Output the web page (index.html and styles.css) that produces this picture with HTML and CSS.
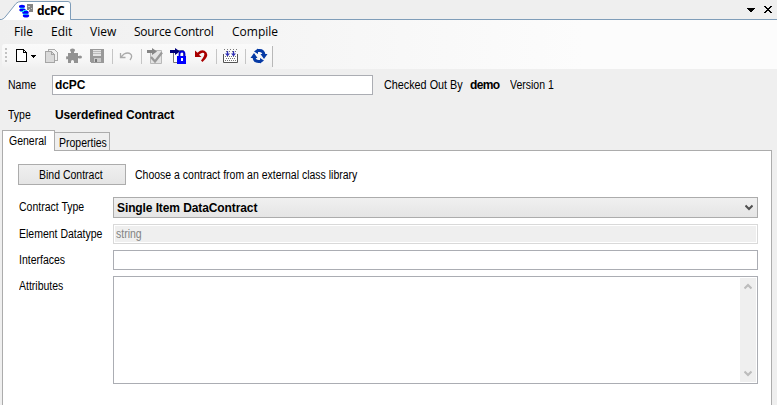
FILE: index.html
```html
<!DOCTYPE html>
<html lang="en">
<head>
<meta charset="utf-8">
<title>dcPC</title>
<link rel="stylesheet" href="styles.css">
</head>
<body>
<header class="tabstrip">
  <svg class="doc-tab" width="72" height="20" viewBox="0 0 72 20">
    <path d="M0 19.5H1.5Q4 19 6 16L16 3.5Q18 1.500 21 1.500H68Q70.500 1.500 70.500 4V19.500H72V20H0Z" fill="#fff"/>
    <path d="M0 19.5H1.500Q4 19 6 16L16 3.500Q18 1.500 21 1.500H68Q70.500 1.500 70.500 4V19.500H72" fill="none" stroke="#7f9db9"/>
    <g fill="#00f"><ellipse cx="22" cy="6.500" rx="3" ry="1.800"/><ellipse cx="22.500" cy="10" rx="3.200" ry="1.800"/><ellipse cx="25.500" cy="12.500" rx="3.200" ry="2"/><ellipse cx="26" cy="15.800" rx="3.200" ry="1.800"/></g>
    <path d="M20 8.200h4M21 11.500h3M23 10.500h4M23 14.200h5" stroke="#17d9f0"/>
    <path d="M27 4h6v8h-4v-2h-2z" fill="#858585"/>
    <path d="M28 6.500h2M31 8.500h1M29 9.500h1" stroke="#ccc"/>
  </svg>
  <span class="doc-name">dcPC</span>
  <svg class="window-btns" width="30" height="12" viewBox="0 0 30 12" shape-rendering="crispEdges">
    <path d="M2 4h8v1h-1v1h-1v1h-1v1h-2v-1h-1v-1h-1v-1h-1z" fill="#000"/>
    <path d="M19 2h2v1h1v1h2v-1h1v-1h2v1h-1v1h-1v1h-1v1h1v1h1v1h1v1h-2v-1h-1v-1h-2v1h-1v1h-2v-1h1v-1h1v-1h1v-1h-1v-1h-1v-1h-1z" fill="#000"/>
  </svg>
</header>
<div class="bars">
  <nav class="menu">
    <span class="m-file">File</span><span class="m-edit">Edit</span><span class="m-view">View</span><span class="m-source">Source Control</span><span class="m-compile">Compile</span>
  </nav>
  <div class="toolbar">
    <svg width="271" height="25" viewBox="2 44 271 25">
      <g shape-rendering="crispEdges">
        <path d="M5 48h2v2H5zM5 52h2v2H5zM5 56h2v2H5zM5 60h2v2H5z" fill="#c2c2c2"/>
        <path d="M16.500 49.500h7l3 3v9h-10z" fill="#fff" stroke="#000"/><path d="M23.500 49v3.500H27" fill="none" stroke="#000"/>
        <path d="M31 55h5v1h-1v1h-1v1h-1v-1h-1v-1h-1z"/>
        <path d="M48.500 49.500h6l3 3v8h-9z" fill="#f1f1f1" stroke="#aaa"/>
        <path d="M45.500 51.500h6l3 3v8h-9z" fill="#dadada" stroke="#a5a5a5"/>
        <path d="M51.500 51.500v3h3" fill="none" stroke="#a5a5a5"/>
      </g>
      <path d="M68 53h3v-1q-1-1-1-2 0-1.500 2.500-1.500t2.500 1.500q0 1-1 2v1h4v3q1 0 2-.5 2 0 2 1.500t-2 1.500q-1 0-2-.5v5h-4v-1.500q0-1.500-1.500-1.500t-1.500 1.500V63h-3v-4l-1.500.5-.5-1.500.5-2 1.500.5z" fill="#929292"/>
      <g shape-rendering="crispEdges">
        <path d="M90 49h14v14H91l-1-1z" fill="#999"/>
        <path d="M93 50h8v6h-8z" fill="#e4e4e4"/><path d="M93 51h8v1h-8zM93 53h8v1h-8z" fill="#bbb"/>
        <path d="M94 58h7v4h-7z" fill="#c9c9c9"/><path d="M95 59h2v3h-2z" fill="#777"/>
        <path d="M112.500 49v15M141.500 49v15M216.500 49v15M245.500 49v15" stroke="#c5c5c5"/>
      </g>
      <path d="M120.500 53v4.500h5M121 57l3-3q4-2 6.500 0t-.5 6" fill="none" stroke="#aaa" stroke-width="1.300"/>
      <!-- check in -->
      <path d="M150.500 50.500h11v13h-11z" fill="#e3e3e3" stroke="#b8b8b8"/>
      <path d="M147 50h5v-2l5 3.500-5 3.500v-2h-5z" fill="#858585"/>
      <path d="M151 57l4 4.500 7-9" fill="none" stroke="#999" stroke-width="2.300"/>
      <!-- check out -->
      <path d="M173.500 50.500h10v12h-10z" fill="#fff" stroke="#777"/>
      <path d="M170 50h5v-2l5 3.500-5 3.500v-2h-5z" fill="#00007b"/>
      <path d="M179.500 57v-3q0-2.500 2.500-2.500t2.500 2.500v3" fill="none" stroke="#0000d8" stroke-width="1.800"/>
      <path d="M177 56h9v8h-9z" fill="#00f"/><path d="M181 58h2v3h-2z" fill="#fff"/>
      <path d="M195 50.500v6.500h6.500l-2.500-2.200q3-3 5-1.800 1.500 2-3 7.500l1.500 1.500q6.500-5.500 4-9.500-4-4.500-9 .3z" fill="#a90000"/>
      <!-- compile -->
      <path d="M223.500 54v8.500h14V54" fill="#fff" stroke="#555" stroke-width="1"/>
      <path d="M224 49.500h13M226 51.500h11" stroke="#777" stroke-dasharray="1 2"/>
      <path d="M225 56.500h12M226 58.500h10M225 60.500h12" stroke="#777" stroke-dasharray="1 1"/>
      <path d="M227.500 51v4M233.500 51v4" stroke="#3333b5" stroke-width="1.300"/><path d="M225 53.500h5l-2.500 3zM231 53.500h5l-2.500 3z" fill="#3333b5"/>
      <!-- refresh -->
      <g fill="none" stroke="#063aa5" stroke-width="3"><path d="M257 50.500h2.500q4 0 4.500 4.500"/><path d="M261 61.500h-2.500q-4 0-4.500-4.500"/></g>
      <path d="M260.500 54h7l-3.500 5zM257.500 58h-7l3.500-5zM258 48.500v5.500l-4-2.500zM260 63.500V58l4 2.500z" fill="#063aa5"/>
      <path d="M273 46v21" stroke="#b8b8b8" stroke-width="2"/>
    </svg>
  </div>
</div>
<main>
  <div class="name-row">
    <span class="lbl name-lbl"><i>Name</i></span>
    <div class="box name-box"><b class="t-dcpc">dcPC</b></div>
    <span class="lbl checked"><i>Checked Out By</i></span>
    <b class="demo">demo</b>
    <span class="lbl"><i>Version 1</i></span>
  </div>
  <div class="type-row"><span class="lbl type-lbl"><i>Type</i></span><b class="type-val">Userdefined Contract</b></div>
  <div class="tabs">
    <div class="tab active"><i>General</i></div><div class="tab"><i>Properties</i></div>
  </div>
  <section class="panel">
    <div class="bind-row">
      <div class="button"><i>Bind Contract</i></div>
      <span class="lbl"><i class="hint">Choose a contract from an external class library</i></span>
    </div>
    <div class="form">
      <span class="lbl"><i>Contract Type</i></span>
      <div class="combo"><b>Single Item DataContract</b>
        <svg width="8" height="7" viewBox="0 0 8 7"><path d="M.5 1.500L4 5l3.500-3.500" fill="none" stroke="#505050" stroke-width="2"/></svg></div>
      <span class="lbl"><i>Element Datatype</i></span>
      <div class="box disabled"><i>string</i></div>
      <span class="lbl"><i>Interfaces</i></span>
      <div class="box"></div>
      <span class="lbl"><i>Attributes</i></span>
      <div class="box area"><div class="scroll">
        <svg width="8" height="7" viewBox="0 0 8 7"><path d="M.5 5.500L4 2l3.500 3.500" fill="none" stroke="#bcbcbc" stroke-width="2.200"/></svg>
        <svg width="8" height="7" viewBox="0 0 8 7"><path d="M.5 1.500L4 5l3.500-3.500" fill="none" stroke="#bcbcbc" stroke-width="2.200"/></svg>
      </div></div>
    </div>
  </section>
</main>
</body>
</html>
```
FILE: styles.css
```css
* { box-sizing: border-box; }
body { margin: 0; width: 777px; height: 405px; overflow: hidden; background: #efefef; color: #000; font: 12px/14px "Liberation Sans", sans-serif; display: flex; flex-direction: column; }
svg { display: block; flex: none; }
i { font-style: normal; display: inline-block; transform: scaleX(.875); transform-origin: 0 50%; white-space: nowrap; }
b { display: inline-block; white-space: nowrap; letter-spacing: -.1px; }
.tabstrip { height: 20px; display: flex; box-shadow: inset 0 -1px #7f9db9; flex: none; }
.doc-name { margin: 3px 0 0 -35px; font: bold 12px/16px "Open Sans", sans-serif; letter-spacing: -.4px; }
.window-btns { margin: 4px 2px 0 auto; }
.bars { height: 49px; flex: none; background: linear-gradient(90deg, #efefef, #fcfcfc 75%); }
.menu { height: 24px; display: flex; font: 12px/24px "Open Sans", sans-serif; white-space: nowrap; padding-left: 14px; }
.m-file { width: 37px; }
.m-edit { width: 39px; }
.m-view { width: 44px; }
.m-source { width: 98px; letter-spacing: -.27px; }
.toolbar { width: 271px; margin-left: 2px; border-radius: 3px; background: linear-gradient(#fafafa, #f7f7f7 60%, #efefef); }
main { flex: 1; display: flex; flex-direction: column; }
.name-row { display: flex; padding: 6px 0 0 8px; height: 36px; }
.lbl { padding-top: 3px; white-space: nowrap; }
.name-lbl { width: 44px; }
.box { border: 1px solid #abadb3; background: #fff; height: 20px; padding: 2px; }
.name-box { width: 321px; }
.checked { width: 97px; padding-left: 11px; }
.checked i { transform: scaleX(.9); }
.demo { width: 40px; padding-top: 3px; letter-spacing: -.6px; }
.type-row { display: flex; height: 25px; padding: 0 0 0 8px; }
.type-lbl { width: 47px; }
.type-val { padding-top: 3px; letter-spacing: -.15px; }
.tabs { display: flex; align-items: flex-end; height: 21px; padding-left: 2px; position: relative; }
.tab { border: 1px solid #acacac; border-left: 0; height: 19px; width: 55px; padding: 3px 0 0 4px; background: #efefef; }
.tab.active { width: 53px; height: 21px; border-left: 1px solid #acacac; border-bottom: 0; background: #fff; padding: 3px 0 0 6px; }
.panel { flex: 1; background: #fff; margin: -1px 5px 0 2px; border: 1px solid #acacac; border-bottom: 0; padding: 13px 13px 0 15px; }
.bind-row { display: flex; gap: 9px; height: 33px; }
.button { width: 108px; height: 21px; border: 1px solid #acacac; background: linear-gradient(#f0f0f0, #e5e5e5); padding: 3px 0 0 20px; }
.bind-row .lbl { padding-top: 4px; }
.form { display: grid; grid-template-columns: 95px 645px; grid-template-rows: 21px 20px 20px 108px; row-gap: 6px; }
.form .lbl { padding-left: 1px; }
.combo { border: 1px solid #acacac; background: linear-gradient(#f0f0f0, #e5e5e5); display: flex; align-items: center; justify-content: space-between; padding: 0 4px 0 3px; }
.disabled { border-color: #d9d9d9; background: #efefef; box-shadow: inset 0 0 0 1px #fff; color: #838383; }
.area { height: 108px; padding: 1px; display: flex; justify-content: flex-end; }
.scroll { width: 16px; background: #efefef; display: flex; flex-direction: column; justify-content: space-between; align-items: center; padding: 5px 0; }
```
